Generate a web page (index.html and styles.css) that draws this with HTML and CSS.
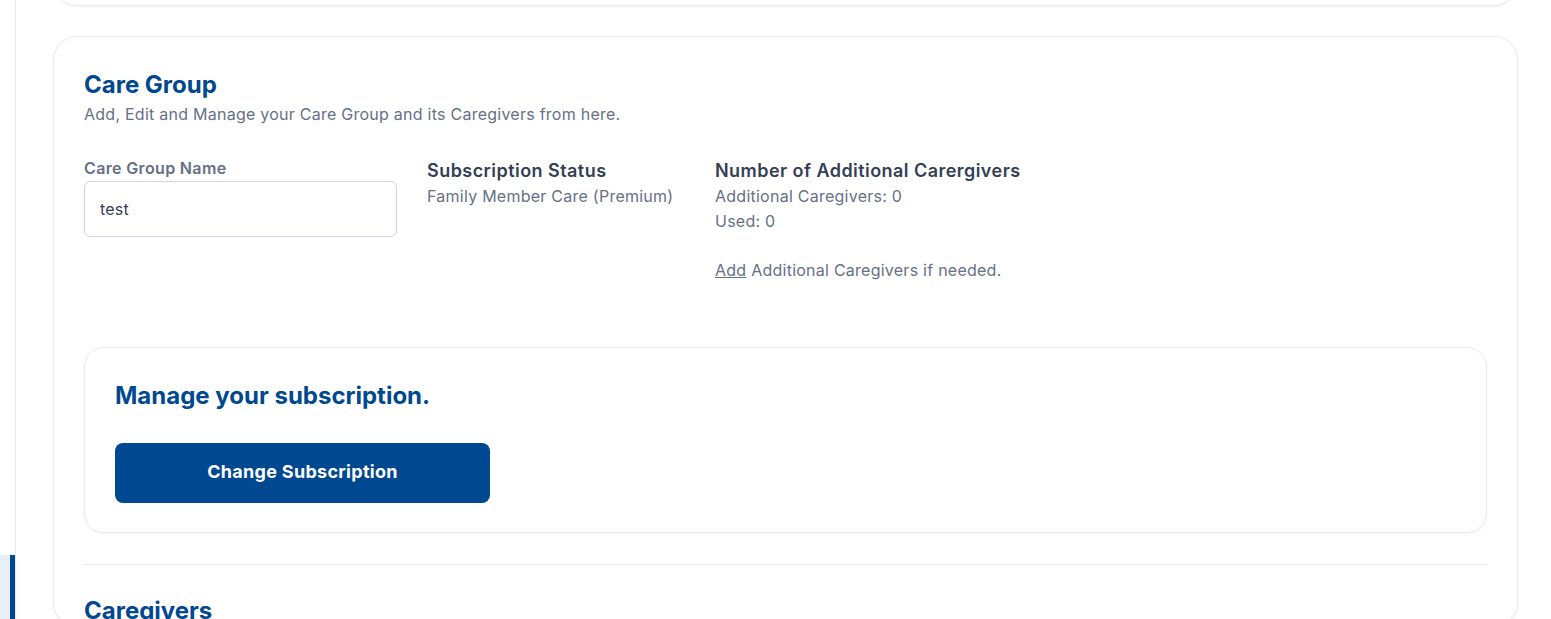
FILE: index.html
```html
<!DOCTYPE html>
<html lang="en">
<head>
<meta charset="utf-8">
<title>Care Group</title>
<link rel="stylesheet" href="styles.css">
</head>
<body>
<div class="app">
  <aside class="sidebar">
    <div class="side-item active"></div>
  </aside>
  <main class="content">
    <section class="card prev-card"></section>
    <section class="card">
      <h2 class="section-title">Care Group</h2>
      <p class="section-sub">Add, Edit and Manage your Care Group and its Caregivers from here.</p>
      <div class="fields">
        <div class="field field-name">
          <label class="field-label" for="cgname">Care Group Name</label>
          <input id="cgname" class="text-input" type="text" value="test">
        </div>
        <div class="field field-status">
          <div class="info-title">Subscription Status</div>
          <div class="info-line">Family Member Care (Premium)</div>
        </div>
        <div class="field field-extra">
          <div class="info-title">Number of Additional Carergivers</div>
          <div class="info-line">Additional Caregivers: 0</div>
          <div class="info-line">Used: 0</div>
          <div class="info-line info-gap"><a href="#" class="link">Add</a> Additional Caregivers if needed.</div>
        </div>
      </div>
      <div class="sub-card">
        <h3 class="section-title">Manage your subscription.</h3>
        <button class="btn-primary" type="button">Change Subscription</button>
      </div>
      <hr class="divider">
      <h2 class="section-title caregivers-title">Caregivers</h2>
    </section>
  </main>
</div>
</body>
</html>
```
FILE: styles.css
```css
* { box-sizing: border-box; }
html, body {
  margin: 0;
  padding: 0;
  height: 619px;
  overflow: hidden;
  background: #ffffff;
  font-family: Inter, "Noto Sans", "Liberation Sans", sans-serif;
}
.app {
  display: flex;
  height: 619px;
}
.sidebar {
  width: 16px;
  flex: none;
  border-right: 1px solid #e8e9ee;
  background: #ffffff;
  display: flex;
  flex-direction: column;
  padding-top: 555px;
}
.side-item.active {
  height: 64px;
  background: #e9eff7;
  border-right: 5px solid #00488f;
}
.content {
  flex: 1;
  padding: 0 33px 0 37px;
  display: flex;
  flex-direction: column;
  gap: 30px;
}
.card {
  background: #ffffff;
  border: 1px solid #eaeaef;
  border-radius: 24px;
  box-shadow: 0 1px 3px rgba(16, 24, 40, 0.05);
  padding: 33px 30px 0 30px;
  flex: none;
}
.prev-card {
  height: 66px;
  margin-top: -60px;
  padding: 0;
}
.section-title {
  margin: 0;
  font-size: 24px;
  line-height: 30px;
  font-weight: 700;
  color: #00488f;
}
.section-sub {
  margin: 3px 0 0 0;
  font-size: 16px;
  line-height: 22px;
  color: #667085;
  letter-spacing: 0.25px;
}
.fields {
  display: flex;
  gap: 30px;
  margin-top: 32px;
}
.field-name { width: 313px; }
.field-status { width: 258px; padding-top: 1px; }
.field-extra { padding-top: 1px; }
.field-label {
  display: block;
  font-size: 16px;
  line-height: 22px;
  font-weight: 600;
  color: #667085;
  letter-spacing: 0.35px;
}
.text-input {
  display: block;
  margin-top: 2px;
  width: 313px;
  height: 56px;
  border: 1px solid #d0d5dd;
  border-radius: 6px;
  padding: 0 15px;
  font-family: inherit;
  font-size: 16px;
  color: #344054;
  background: #fff;
  outline: none;
  letter-spacing: 0.2px;
}
.info-title {
  font-size: 18px;
  line-height: 26px;
  font-weight: 600;
  color: #344054;
  letter-spacing: 0.45px;
}
.info-line {
  font-size: 16px;
  line-height: 25px;
  color: #667085;
  letter-spacing: 0.25px;
}
.info-gap { margin-top: 24px; }
.link {
  color: #667085;
  text-decoration: underline;
}
.sub-card {
  margin-top: 64px;
  border: 1px solid #eaeaef;
  border-radius: 20px;
  box-shadow: 0 1px 3px rgba(16, 24, 40, 0.05);
  padding: 33px 30px 29px 30px;
}
.btn-primary {
  display: block;
  margin-top: 32px;
  width: 375px;
  height: 60px;
  padding: 0 0 3px 0;
  border: none;
  border-radius: 8px;
  background: #00488f;
  color: #ffffff;
  font-family: inherit;
  font-size: 18px;
  font-weight: 700;
  letter-spacing: 0.3px;
  cursor: pointer;
}
.divider {
  margin: 31px 0 0 0;
  border: none;
  border-top: 1px solid #e8e9ee;
  height: 0;
}
.caregivers-title {
  margin-top: 31px;
}
```
